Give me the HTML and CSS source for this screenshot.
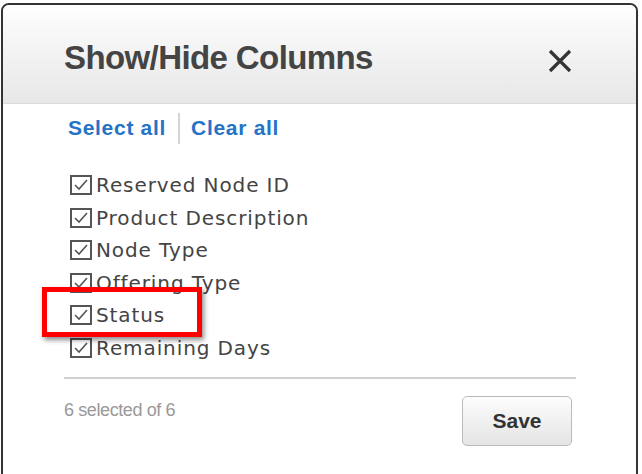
FILE: index.html
```html
<!DOCTYPE html>
<html>
<head>
    <meta charset="UTF-8">
    <title>Show/Hide Columns</title>
    <link rel="stylesheet" href="styles.css">
</head>
<body>
    <div class="dialog">
        <div class="dialog-header">
            <h2 class="dialog-title">Show/Hide Columns</h2>
            <button class="close-btn" aria-label="Close">
                <svg width="24" height="24" viewBox="0 0 24 24">
                    <path d="M2 2 L22 22 M22 2 L2 22" stroke="#333" stroke-width="3.2" fill="none"/>
                </svg>
            </button>
        </div>

        <div class="dialog-body">
            <div class="bulk-links">
                <a href="#" class="link">Select all</a>
                <span class="link-sep"></span>
                <a href="#" class="link">Clear all</a>
            </div>

            <ul class="column-list">
                <li class="column-item"><span class="checkbox"><svg viewBox="0 0 16 14" width="16" height="14"><path d="M2 7 L6 11 L14 2" stroke="#555" stroke-width="1.6" fill="none"/></svg></span>Reserved Node ID</li>
                <li class="column-item"><span class="checkbox"><svg viewBox="0 0 16 14" width="16" height="14"><path d="M2 7 L6 11 L14 2" stroke="#555" stroke-width="1.6" fill="none"/></svg></span>Product Description</li>
                <li class="column-item"><span class="checkbox"><svg viewBox="0 0 16 14" width="16" height="14"><path d="M2 7 L6 11 L14 2" stroke="#555" stroke-width="1.6" fill="none"/></svg></span>Node Type</li>
                <li class="column-item"><span class="checkbox"><svg viewBox="0 0 16 14" width="16" height="14"><path d="M2 7 L6 11 L14 2" stroke="#555" stroke-width="1.6" fill="none"/></svg></span>Offering Type</li>
                <li class="column-item"><span class="checkbox"><svg viewBox="0 0 16 14" width="16" height="14"><path d="M2 7 L6 11 L14 2" stroke="#555" stroke-width="1.6" fill="none"/></svg></span>Status</li>
                <li class="column-item"><span class="checkbox"><svg viewBox="0 0 16 14" width="16" height="14"><path d="M2 7 L6 11 L14 2" stroke="#555" stroke-width="1.6" fill="none"/></svg></span>Remaining Days</li>
            </ul>

            <div class="dialog-footer">
                <span class="selected-count">6 selected of 6</span>
                <button class="btn-save">Save</button>
            </div>
        </div>

        <div class="highlight"></div>
    </div>
</body>
</html>
```

FILE: styles.css
```css
body {
    margin: 0;
    background: #fff;
    font-family: 'Liberation Sans', Arial, sans-serif;
    overflow: hidden;
}

.dialog {
    position: relative;
    margin: 3px 0 0 1px;
    width: 633px;
    height: 600px;
    border: 2px solid #333;
    border-radius: 8px 8px 0 0;
    background: #fff;
}

.dialog-header {
    display: flex;
    justify-content: space-between;
    align-items: center;
    height: 90px;
    padding: 8px 64px 0 61px;
    border-radius: 6px 6px 0 0;
    background: linear-gradient(to bottom, #fefefe, #e7e7e7);
    border-bottom: 1px solid #dcdcdc;
}

.dialog-title {
    margin: 0;
    font-size: 33px;
    font-weight: 700;
    letter-spacing: -0.6px;
    color: #444;
}

.close-btn {
    border: none;
    background: none;
    padding: 0;
    width: 24px;
    height: 24px;
    margin-top: 6px;
    cursor: pointer;
}

.dialog-body {
    padding: 8px 60px 0 61px;
}

.bulk-links {
    display: flex;
    align-items: center;
    height: 32px;
    padding-left: 4px;
}

.link {
    color: #2473c6;
    font-size: 21px;
    font-weight: 700;
    letter-spacing: 0.7px;
    text-decoration: none;
}

.link-sep {
    width: 2px;
    height: 31px;
    margin: 0 11px 0 12px;
    background: #d4d4d4;
}

.column-list {
    list-style: none;
    margin: 25px 0 0;
    padding: 0 0 0 6px;
}

.column-item {
    display: flex;
    align-items: center;
    height: 32.5px;
    font-family: 'DejaVu Sans', Verdana, sans-serif;
    font-size: 20px;
    letter-spacing: 0.9px;
    color: #444;
}

.checkbox {
    display: inline-flex;
    align-items: center;
    justify-content: center;
    width: 18px;
    height: 16px;
    margin-right: 4px;
    border: 2px solid #555;
    background: #fff;
}

.dialog-footer {
    display: flex;
    justify-content: space-between;
    align-items: flex-start;
    margin-top: 13px;
    padding: 17px 4px 0 0;
    border-top: 2px solid #d0d0d0;
}

.selected-count {
    padding-top: 4px;
    font-size: 18px;
    letter-spacing: -0.4px;
    line-height: 20px;
    color: #999;
}

.btn-save {
    width: 110px;
    height: 50px;
    border: 1px solid #bbb;
    border-radius: 5px;
    background: linear-gradient(to bottom, #fdfdfd, #e4e4e4);
    font-family: 'Liberation Sans', Arial, sans-serif;
    font-size: 21px;
    font-weight: 700;
    color: #333;
    cursor: pointer;
}

/* annotation box */
.highlight {
    position: absolute;
    left: 39px;
    top: 282px;
    width: 150px;
    height: 40px;
    border: 5px solid #f00;
    box-shadow: 2px 3px 5px rgba(0, 0, 0, 0.45);
}
```
